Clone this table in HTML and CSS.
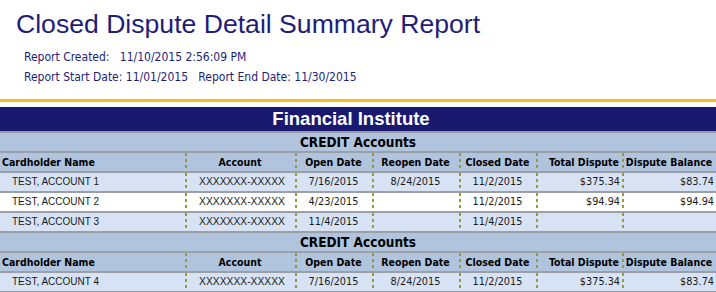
FILE: index.html
```html
<!DOCTYPE html>
<html>
<head>
<meta charset="utf-8">
<link rel="stylesheet" href="styles.css">
</head>
<body>
<div class="report-head">
  <h1 class="title">Closed Dispute Detail Summary Report</h1>
  <div class="meta">
    <div class="meta-line">Report Created:&nbsp;&nbsp;&nbsp;11/10/2015 2:56:09 PM</div>
    <div class="meta-line">Report Start Date: 11/01/2015&nbsp;&nbsp;&nbsp;Report End Date: 11/30/2015</div>
  </div>
</div>
<div class="rule"></div>
<div class="band">Financial Institute</div>
<table class="grid">
  <colgroup>
    <col class="c1"><col class="c2"><col class="c3"><col class="c4"><col class="c5"><col class="c6"><col class="c7">
  </colgroup>
  <tbody>
    <tr class="section"><td colspan="7">CREDIT Accounts</td></tr>
    <tr class="head">
      <td class="name">Cardholder Name</td>
      <td class="div">Account</td>
      <td class="div">Open Date</td>
      <td class="div">Reopen Date</td>
      <td class="div">Closed Date</td>
      <td class="div right">Total Dispute</td>
      <td class="div">Dispute Balance</td>
    </tr>
    <tr class="row alt">
      <td class="name">TEST, ACCOUNT 1</td>
      <td class="div acct">XXXXXXX-XXXXX</td>
      <td class="div">7/16/2015</td>
      <td class="div">8/24/2015</td>
      <td class="div">11/2/2015</td>
      <td class="div amt">$375.34</td>
      <td class="div amt">$83.74</td>
    </tr>
    <tr class="row">
      <td class="name">TEST, ACCOUNT 2</td>
      <td class="div acct">XXXXXXX-XXXXX</td>
      <td class="div">4/23/2015</td>
      <td class="div"></td>
      <td class="div">11/2/2015</td>
      <td class="div amt">$94.94</td>
      <td class="div amt">$94.94</td>
    </tr>
    <tr class="row alt">
      <td class="name">TEST, ACCOUNT 3</td>
      <td class="div acct">XXXXXXX-XXXXX</td>
      <td class="div">11/4/2015</td>
      <td class="div"></td>
      <td class="div">11/4/2015</td>
      <td class="div amt"></td>
      <td class="div amt"></td>
    </tr>
    <tr class="section"><td colspan="7">CREDIT Accounts</td></tr>
    <tr class="head">
      <td class="name">Cardholder Name</td>
      <td class="div">Account</td>
      <td class="div">Open Date</td>
      <td class="div">Reopen Date</td>
      <td class="div">Closed Date</td>
      <td class="div right">Total Dispute</td>
      <td class="div">Dispute Balance</td>
    </tr>
    <tr class="row alt">
      <td class="name">TEST, ACCOUNT 4</td>
      <td class="div acct">XXXXXXX-XXXXX</td>
      <td class="div">7/16/2015</td>
      <td class="div">8/24/2015</td>
      <td class="div">11/2/2015</td>
      <td class="div amt">$375.34</td>
      <td class="div amt">$83.74</td>
    </tr>
  </tbody>
</table>
</body>
</html>
```

FILE: styles.css
```css
html, body {
  margin: 0;
  padding: 0;
  background: #fff;
  overflow: hidden;
}
body {
  width: 716px;
}
.report-head {
  padding: 9px 0 0 16px;
  height: 91px;
  box-sizing: border-box;
}
.title {
  margin: 0;
  font-family: "Liberation Sans", Arial, sans-serif;
  font-weight: normal;
  font-size: 26.6px;
  line-height: 31px;
  color: #1e1e78;
}
.meta {
  margin-top: 7px;
  padding-left: 8px;
  font-family: "DejaVu Sans Condensed", "DejaVu Sans", sans-serif;
  font-size: 12px;
  line-height: 20px;
  color: #1e1e78;
}
.rule {
  height: 3px;
  background: #f8bd22;
  margin-top: 8px;
}
.band {
  margin-top: 5px;
  height: 24px;
  line-height: 24px;
  background: #191970;
  border-bottom: 2px solid #9a9ca6;
  color: #fff;
  font-family: "Liberation Sans", Arial, sans-serif;
  font-weight: bold;
  font-size: 18.5px;
  text-align: center;
  padding-right: 14px;
}
.grid {
  width: 716px;
  table-layout: fixed;
  border-collapse: separate;
  border-spacing: 0;
}
.c1 { width: 185px; }
.c2 { width: 110px; }
.c3 { width: 77px; }
.c4 { width: 87px; }
.c5 { width: 77px; }
.c6 { width: 86px; }
.c7 { width: 94px; }
.grid td {
  padding: 0;
  height: 18px;
  line-height: 18px;
  border-bottom: 2px solid #9c9fa6;
  white-space: nowrap;
  overflow: hidden;
  text-align: center;
  font-family: "DejaVu Sans Condensed", "DejaVu Sans", sans-serif;
  font-size: 10.8px;
  color: #1a1a1a;
}
.section td {
  background: #b0c4de;
  font-weight: bold;
  font-size: 13.5px;
  color: #000;
}
.head td {
  background-color: #b0c4de;
  font-weight: bold;
  font-size: 10.5px;
  color: #000;
}
.row td {
  background-color: #ffffff;
}
.row.alt td {
  background-color: #d7e3f5;
}
.grid td.div {
  background-image: repeating-linear-gradient(to bottom, #9a9a30 0 3px, transparent 3px 6px);
  background-size: 2px 100%;
  background-repeat: no-repeat;
  background-position: left top;
}
.grid td.name {
  text-align: left;
}
.head td.name {
  padding-left: 2px;
}
.row td.name {
  padding-left: 12px;
  font-family: "Liberation Sans", Arial, sans-serif;
  font-size: 10px;
}
.grid td.acct {
  font-family: "Liberation Sans", Arial, sans-serif;
  font-size: 10.3px;
  padding-left: 4px;
}
.grid td.amt {
  text-align: right;
  padding-right: 2px;
}
.grid td.right {
  text-align: right;
  padding-right: 3px;
}
```
